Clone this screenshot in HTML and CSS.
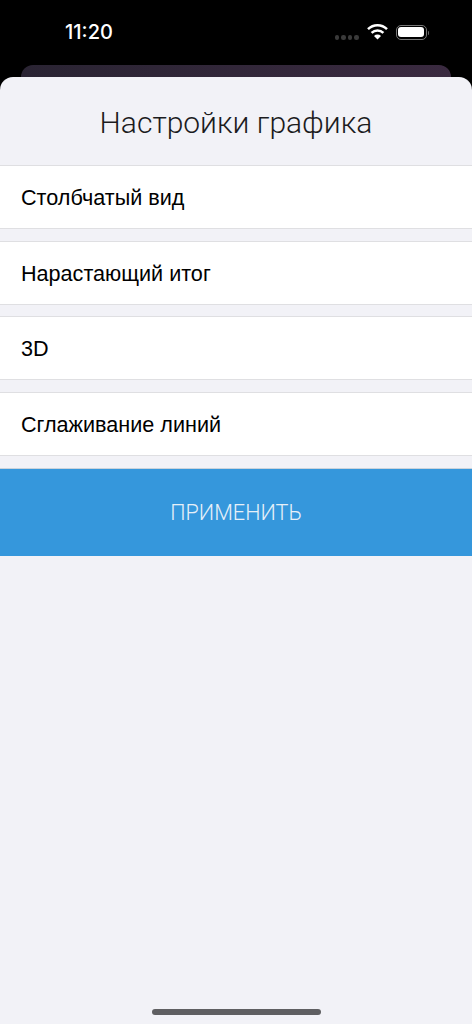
FILE: index.html
```html
<!DOCTYPE html>
<html lang="ru">
<head>
<meta charset="UTF-8">
<title>Настройки графика</title>
<link rel="stylesheet" href="styles.css">
</head>
<body>
<div class="status">
    <span class="time">11:20</span>
    <div class="status-icons">
        <div class="dots"><i></i><i></i><i></i><i></i></div>
        <svg class="wifi" width="21" height="16" viewBox="0 0 21 16">
            <path d="M1 5.2 A13.5 13.5 0 0 1 20 5.2" fill="none" stroke="#fff" stroke-width="2.5"/>
            <path d="M4.6 8.8 A8.4 8.4 0 0 1 16.4 8.8" fill="none" stroke="#fff" stroke-width="2.5"/>
            <path d="M10.5 15.5 L7 11.9 A5 5 0 0 1 14 11.9 Z" fill="#fff"/>
        </svg>
        <div class="battery"><div class="battery-fill"></div></div>
        <div class="battery-cap"></div>
    </div>
</div>
<div class="behind"></div>
<div class="sheet">
    <h2>Настройки графика</h2>
    <div class="row">Столбчатый вид</div>
    <div class="row">Нарастающий итог</div>
    <div class="row">3D</div>
    <div class="row">Сглаживание линий</div>
    <div class="apply">ПРИМЕНИТЬ</div>
    <div class="home-bar"></div>
</div>
</body>
</html>
```

FILE: styles.css
```css
html, body {
    margin: 0;
    height: 100%;
}
body {
    width: 472px;
    height: 1024px;
    overflow: hidden;
    background: #000;
    font-family: "Liberation Sans", Arial, sans-serif;
    position: relative;
}
.status {
    height: 65px;
    display: flex;
    justify-content: space-between;
    padding: 0 43px 0 65px;
    box-sizing: border-box;
}
.time {
    color: #fff;
    font-family: "Inter", sans-serif;
    font-size: 20px;
    font-weight: 500;
    line-height: 22px;
    margin-top: 21px;
}
.status-icons {
    display: flex;
    align-items: flex-start;
    padding-top: 24px;
}
.dots {
    display: flex;
    gap: 2px;
    margin-top: 11px;
    margin-right: 8px;
}
.dots i {
    display: block;
    width: 4.5px;
    height: 4.5px;
    border-radius: 50%;
    background: #3a3a3a;
}
.wifi {
    margin-right: 8px;
}
.battery {
    border: 1.5px solid #777;
    border-radius: 5px;
    padding: 1.5px;
    margin-top: .5px;
    width: 26px;
    height: 10px;
}
.battery-fill {
    width: 100%;
    height: 100%;
    background: #fff;
    border-radius: 3px;
}
.battery-cap {
    width: 1.5px;
    height: 4px;
    background: #666;
    margin: 7px 0 0 1px;
    border-radius: 0 1px 1px 0;
}
.behind {
    height: 12px;
    margin: 0 21px;
    background: linear-gradient(90deg, #2a2433, #3a2a40);
    border-radius: 12px 12px 0 0;
}
.sheet {
    height: 947px;
    background: #f2f2f7;
    border-radius: 13px 13px 0 0;
    position: relative;
    overflow: hidden;
}
h2 {
    margin: 0;
    height: 88px;
    line-height: 92px;
    font-family: "Roboto", sans-serif;
    font-size: 30px;
    font-weight: 300;
    text-align: center;
    color: #1c1c1e;
}
.row {
    height: 62px;
    background: #fff;
    border-top: 1px solid #dfdfe2;
    border-bottom: 1px solid #dfdfe2;
    margin-bottom: 11.67px;
    padding-left: 21px;
    font-size: 21.6px;
    line-height: 64px;
    color: #000;
}
.apply {
    height: 88px;
    box-sizing: border-box;
    background: #3597dc;
    border-top: 1px solid #c9d3dc;
    color: #e6f0f8;
    text-align: center;
    font-family: "Roboto", sans-serif;
    font-size: 21.6px;
    font-weight: 300;
    line-height: 88px;
    margin-top: 12px;
}
.home-bar {
    position: absolute;
    left: 152px;
    bottom: 9px;
    width: 169px;
    height: 6px;
    background: #5f5f62;
    border-radius: 3px;
}
```
